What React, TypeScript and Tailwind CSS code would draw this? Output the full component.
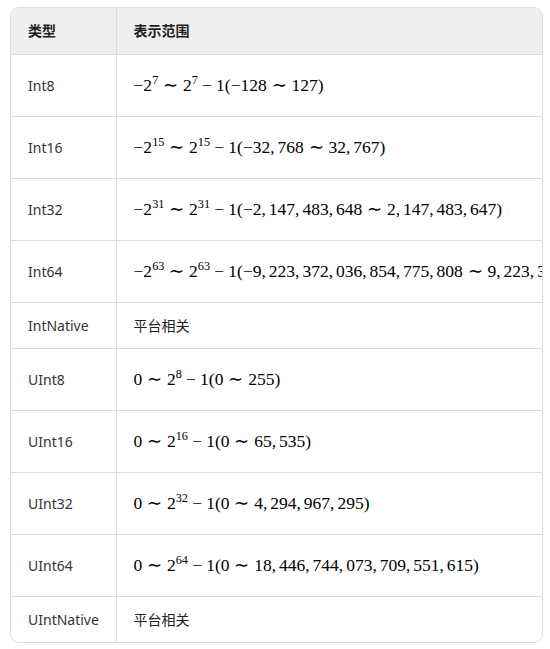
import React from 'react';

const Rel = () => <span className="mx-[0.278em]">∼</span>;
const Bin = () => <span className="mx-[0.24em]">−</span>;

function Sup({ children }: { children: React.ReactNode }) {
  return <sup className="text-[0.7em] -top-[0.55em]">{children}</sup>;
}

// digits with thin spaces after commas, like katex punctuation
function Num({ v }: { v: string }) {
  const parts = v.split(',');
  return (
    <>
      {parts.map((p, i) => (
        <span key={i}>
          {p}
          {i < parts.length - 1 && <span className="mr-[0.167em]">,</span>}
        </span>
      ))}
    </>
  );
}

function Signed({ bits, lo, hi }: { bits: string; lo: string; hi: string }) {
  return (
    <>
      −2<Sup>{bits}</Sup>
      <Rel />2<Sup>{bits}</Sup>
      <Bin />1(−<Num v={lo} />
      <Rel />
      <Num v={hi} />)
    </>
  );
}

function Unsigned({ bits, hi }: { bits: string; hi: string }) {
  return (
    <>
      0<Rel />2<Sup>{bits}</Sup>
      <Bin />1(0<Rel />
      <Num v={hi} />)
    </>
  );
}

type Row = { name: string; range: React.ReactNode; math: boolean };

const rows: Row[] = [
  { name: 'Int8', math: true, range: <Signed bits="7" lo="128" hi="127" /> },
  { name: 'Int16', math: true, range: <Signed bits="15" lo="32,768" hi="32,767" /> },
  { name: 'Int32', math: true, range: <Signed bits="31" lo="2,147,483,648" hi="2,147,483,647" /> },
  {
    name: 'Int64',
    math: true,
    range: <Signed bits="63" lo="9,223,372,036,854,775,808" hi="9,223,372,036,854,775,807" />,
  },
  { name: 'IntNative', math: false, range: '平台相关' },
  { name: 'UInt8', math: true, range: <Unsigned bits="8" hi="255" /> },
  { name: 'UInt16', math: true, range: <Unsigned bits="16" hi="65,535" /> },
  { name: 'UInt32', math: true, range: <Unsigned bits="32" hi="4,294,967,295" /> },
  { name: 'UInt64', math: true, range: <Unsigned bits="64" hi="18,446,744,073,709,551,615" /> },
  { name: 'UIntNative', math: false, range: '平台相关' },
];

export default function App() {
  return (
    <div className="w-[550px] h-[649px] bg-white pt-[7px] pl-[10px] font-['Noto_Sans','Noto_Sans_CJK_SC',sans-serif]">
      <div className="w-[533px] border border-[#d7dce4] rounded-[9px] overflow-hidden">
        <table className="w-full border-collapse table-fixed">
          <colgroup>
            <col className="w-[105px]" />
            <col />
          </colgroup>
          <thead>
            <tr className="h-[46px] bg-[#efefef]">
              <th className="border-r border-[#d7dce4] text-left pl-[17px] text-[14px] font-bold text-[#1f1f1f]">类型</th>
              <th className="text-left pl-[17px] text-[14px] font-bold text-[#1f1f1f]">表示范围</th>
            </tr>
          </thead>
          <tbody>
            {rows.map((r) => (
              <tr key={r.name} className={`border-t border-[#d7dce4] ${r.math ? 'h-[62px]' : 'h-[46px]'}`}>
                <td className="border-r border-[#d7dce4] pl-[17px] text-[14px] text-[#333] align-middle">{r.name}</td>
                <td className="pl-[17px] align-middle overflow-hidden whitespace-nowrap">
                  {r.math ? (
                    <span className="font-['Liberation_Serif',serif] text-[17.5px] text-black">{r.range}</span>
                  ) : (
                    <span className="text-[14px] text-[#222]">{r.range}</span>
                  )}
                </td>
              </tr>
            ))}
          </tbody>
        </table>
      </div>
    </div>
  );
}
